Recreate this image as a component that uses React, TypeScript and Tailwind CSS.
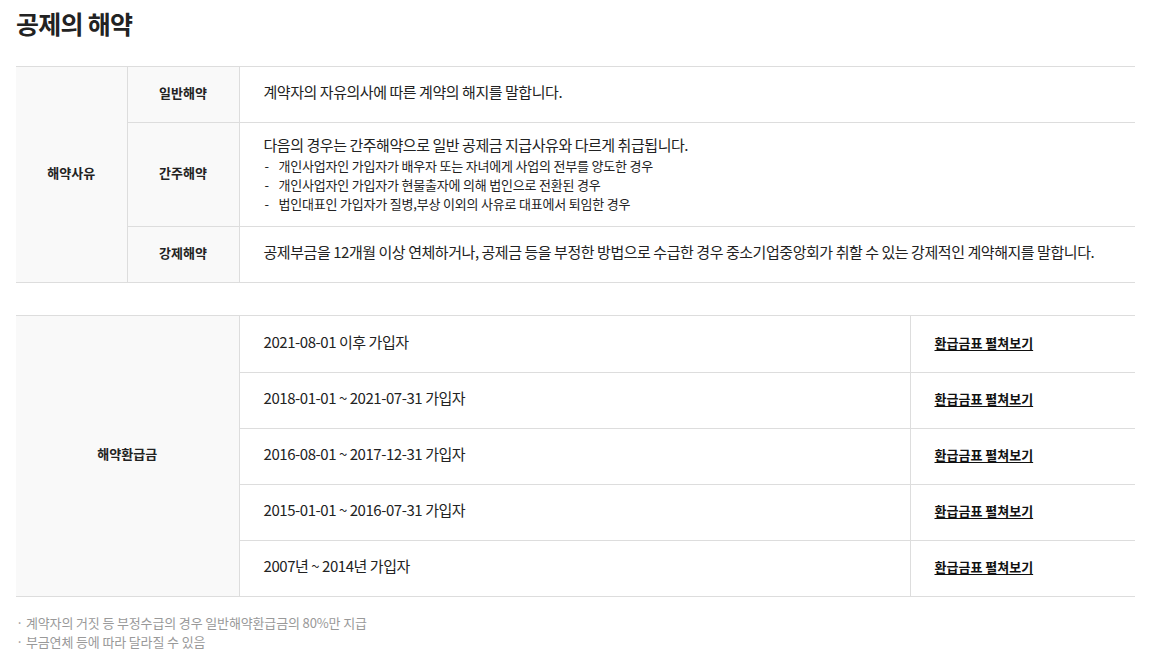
import React from 'react';

const font = { fontFamily: '"Noto Sans CJK KR", "Noto Sans", sans-serif' };

const refundRows = [
  '2021-08-01 이후 가입자',
  '2018-01-01 ~ 2021-07-31 가입자',
  '2016-08-01 ~ 2017-12-31 가입자',
  '2015-01-01 ~ 2016-07-31 가입자',
  '2007년 ~ 2014년 가입자',
];

const deemed = [
  '개인사업자인 가입자가 배우자 또는 자녀에게 사업의 전부를 양도한 경우',
  '개인사업자인 가입자가 현물출자에 의해 법인으로 전환된 경우',
  '법인대표인 가입자가 질병,부상 이외의 사유로 대표에서 퇴임한 경우',
];

const th = 'border-[#ddd] bg-[#f9f9f9] pb-[4px] text-[13px] font-bold tracking-normal';

// Section describing contract termination reasons and refund tables
const App: React.FC = () => {
  return (
    <div className="min-h-screen bg-white pl-4 pr-[28px] pt-[5px] text-[#222]" style={font}>
      <h2 className="text-[25px] font-bold leading-[36px] tracking-[-0.03em]">공제의 해약</h2>

      <table className="mt-[25px] w-full border-collapse border-y border-[#ddd] text-[15px] tracking-[-0.03em]">
        <colgroup>
          <col className="w-[111px]" />
          <col className="w-[112px]" />
          <col />
        </colgroup>
        <tbody>
          <tr className="h-[56px]">
            <th rowSpan={3} className={`border-r ${th}`}>
              해약사유
            </th>
            <th className={`border-r border-b ${th}`}>일반해약</th>
            <td className="border-b border-[#ddd] pl-6 pb-[4px]">계약자의 자유의사에 따른 계약의 해지를 말합니다.</td>
          </tr>
          <tr className="h-[104px]">
            <th className={`border-r border-b ${th}`}>간주해약</th>
            <td className="border-b border-[#ddd] pl-6 pb-[3px]">
              <p className="leading-[22px]">다음의 경우는 간주해약으로 일반 공제금 지급사유와 다르게 취급됩니다.</p>
              <ul className="text-[13px] leading-[19px] tracking-[-0.2px]">
                {deemed.map((d) => (
                  <li key={d} className="flex">
                    <span className="w-[15px] pl-[1px]">-</span>
                    <span>{d}</span>
                  </li>
                ))}
              </ul>
            </td>
          </tr>
          <tr className="h-[56px]">
            <th className={`border-r ${th}`}>강제해약</th>
            <td className="pl-6 pb-[4px]">
              공제부금을 12개월 이상 연체하거나, 공제금 등을 부정한 방법으로 수급한 경우 중소기업중앙회가 취할 수 있는 강제적인 계약해지를 말합니다.
            </td>
          </tr>
        </tbody>
      </table>

      <table className="mt-[32px] w-full border-collapse border-y border-[#ddd] text-[15px] tracking-[-0.03em]">
        <colgroup>
          <col className="w-[223px]" />
          <col />
          <col className="w-[225px]" />
        </colgroup>
        <tbody>
          {refundRows.map((r, i) => (
            <tr key={r} className={i === 0 ? 'h-[57px]' : 'h-[56px]'}>
              {i === 0 && (
                <th rowSpan={5} className={`border-r ${th}`}>
                  해약환급금
                </th>
              )}
              <td className="border-r border-b border-[#ddd] pl-6 pb-[4px]">{r}</td>
              <td className="border-b border-[#ddd] pl-6 pb-[4px]">
                <a
                  href="#"
                  className="text-[13px] font-bold tracking-normal text-[#111] underline underline-offset-2"
                >
                  환급금표 펼쳐보기
                </a>
              </td>
            </tr>
          ))}
        </tbody>
      </table>

      <ul className="mt-[16px] text-[13px] leading-[19px] tracking-[-0.14px] text-[#999]">
        <li>· 계약자의 거짓 등 부정수급의 경우 일반해약환급금의 80%만 지급</li>
        <li>· 부금연체 등에 따라 달라질 수 있음</li>
      </ul>
    </div>
  );
};

export default App;
